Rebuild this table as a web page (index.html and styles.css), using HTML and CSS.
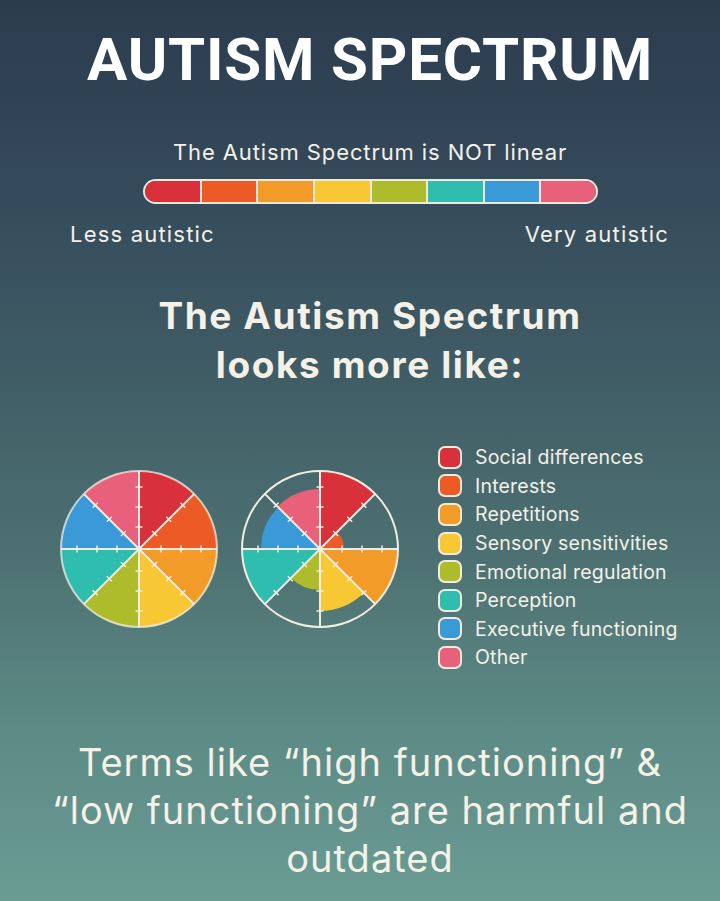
FILE: index.html
```html
<!DOCTYPE html>
<html lang="en">
<head>
<meta charset="utf-8">
<title>Autism Spectrum</title>
<link rel="stylesheet" href="styles.css">
</head>
<body>
<main class="page">
  <h1 class="title">AUTISM SPECTRUM</h1>
  <p class="subtitle">The Autism Spectrum is NOT linear</p>
  <div class="bar">
    <span class="seg c-red"></span>
    <span class="seg c-orange"></span>
    <span class="seg c-amber"></span>
    <span class="seg c-yellow"></span>
    <span class="seg c-green"></span>
    <span class="seg c-teal"></span>
    <span class="seg c-blue"></span>
    <span class="seg c-pink"></span>
  </div>
  <div class="bar-labels">
    <span>Less autistic</span>
    <span>Very autistic</span>
  </div>
  <h2 class="heading">The Autism Spectrum<br>looks more like:</h2>

  <section class="charts">
    <svg class="pie" viewBox="-80 -80 160 160" width="160" height="160">
      <defs>
        <g id="ticks">
          <path d="M-3.5 -22H3.5M-3.5 -42H3.5M-3.5 -62H3.5"/>
        </g>
      </defs>
      <path class="f-red" d="M0 0L0 -78A78 78 0 0 1 55.15 -55.15Z"/>
      <path class="f-orange" d="M0 0L55.15 -55.15A78 78 0 0 1 78 0Z"/>
      <path class="f-amber" d="M0 0L78 0A78 78 0 0 1 55.15 55.15Z"/>
      <path class="f-yellow" d="M0 0L55.15 55.15A78 78 0 0 1 0 78Z"/>
      <path class="f-green" d="M0 0L0 78A78 78 0 0 1 -55.15 55.15Z"/>
      <path class="f-teal" d="M0 0L-55.15 55.15A78 78 0 0 1 -78 0Z"/>
      <path class="f-blue" d="M0 0L-78 0A78 78 0 0 1 -55.15 -55.15Z"/>
      <path class="f-pink" d="M0 0L-55.15 -55.15A78 78 0 0 1 0 -78Z"/>
      <g class="lines">
        <circle cx="0" cy="0" r="78" class="outline-soft"/>
        <path d="M0 -78V78M-78 0H78M-55.15 -55.15L55.15 55.15M55.15 -55.15L-55.15 55.15"/>
        <use href="#ticks"/>
        <use href="#ticks" transform="rotate(45)"/>
        <use href="#ticks" transform="rotate(90)"/>
        <use href="#ticks" transform="rotate(135)"/>
        <use href="#ticks" transform="rotate(180)"/>
        <use href="#ticks" transform="rotate(225)"/>
        <use href="#ticks" transform="rotate(270)"/>
        <use href="#ticks" transform="rotate(315)"/>
      </g>
    </svg>

    <svg class="pie" viewBox="-80 -80 160 160" width="160" height="160">
      <path class="f-red" d="M0 0L0 -78A78 78 0 0 1 55.15 -55.15Z"/>
      <path class="f-orange" d="M0 0L16.97 -16.97A24 24 0 0 1 24 0Z"/>
      <path class="f-amber" d="M0 0L78 0A78 78 0 0 1 55.15 55.15Z"/>
      <path class="f-yellow" d="M0 0L43.84 43.84A62 62 0 0 1 0 62Z"/>
      <path class="f-green" d="M0 0L0 41A41 41 0 0 1 -28.99 28.99Z"/>
      <path class="f-teal" d="M0 0L-55.15 55.15A78 78 0 0 1 -78 0Z"/>
      <path class="f-blue" d="M0 0L-59 0A59 59 0 0 1 -41.72 -41.72Z"/>
      <path class="f-pink" d="M0 0L-42.43 -42.43A60 60 0 0 1 0 -60Z"/>
      <g class="lines">
        <circle cx="0" cy="0" r="78"/>
        <path d="M0 -78V78M-78 0H78M-55.15 -55.15L55.15 55.15M55.15 -55.15L-55.15 55.15"/>
        <use href="#ticks"/>
        <use href="#ticks" transform="rotate(45)"/>
        <use href="#ticks" transform="rotate(90)"/>
        <use href="#ticks" transform="rotate(135)"/>
        <use href="#ticks" transform="rotate(180)"/>
        <use href="#ticks" transform="rotate(225)"/>
        <use href="#ticks" transform="rotate(270)"/>
        <use href="#ticks" transform="rotate(315)"/>
      </g>
    </svg>

    <ul class="legend">
      <li><span class="swatch c-red"></span>Social differences</li>
      <li><span class="swatch c-orange"></span>Interests</li>
      <li><span class="swatch c-amber"></span>Repetitions</li>
      <li><span class="swatch c-yellow"></span>Sensory sensitivities</li>
      <li><span class="swatch c-green"></span>Emotional regulation</li>
      <li><span class="swatch c-teal"></span>Perception</li>
      <li><span class="swatch c-blue"></span>Executive functioning</li>
      <li><span class="swatch c-pink"></span>Other</li>
    </ul>
  </section>

  <p class="closing">Terms like “high functioning” &amp;<br>“low functioning” are harmful and<br>outdated</p>
</main>
</body>
</html>
```

FILE: styles.css
```css
* { box-sizing: border-box; }

html, body {
  margin: 0;
  padding: 0;
}

body {
  background: #6a9c94;
}

.page {
  width: 720px;
  height: 901px;
  overflow: hidden;
  padding-top: 30px;
  padding-left: 20px;
  color: #f4f1e8;
  text-align: center;
  font-family: Inter, "Noto Sans", sans-serif;
  background: linear-gradient(180deg, #2b3c4d 0%, #34495a 20%, #405d66 42%, #4d7172 62%, #5c8984 80%, #6a9c94 100%);
}

.title {
  margin: 0;
  font-family: Roboto, "Liberation Sans", sans-serif;
  font-weight: 700;
  font-size: 60px;
  line-height: 60px;
  letter-spacing: 0.8px;
  color: #ffffff;
}

.subtitle {
  margin: 50px 0 0;
  font-size: 22px;
  line-height: 24px;
  font-weight: 400;
  letter-spacing: 0.9px;
}

.bar {
  display: flex;
  width: 455px;
  height: 25px;
  margin: 15px 0 0 123px;
  border: 2px solid #efe9dc;
  border-radius: 13px;
  overflow: hidden;
}

.seg {
  flex: 1;
}

.seg + .seg {
  border-left: 2px solid #efe9dc;
}

.bar-labels {
  display: flex;
  justify-content: space-between;
  margin-top: 18px;
  padding: 0 51px 0 50px;
  font-size: 22px;
  line-height: 24px;
  letter-spacing: 1.2px;
}

.heading {
  margin: 45px 0 0;
  font-size: 37px;
  line-height: 49px;
  font-weight: 700;
  letter-spacing: 1.6px;
}

.charts {
  display: flex;
  align-items: flex-start;
  margin-top: 54px;
  padding-left: 39px;
}

.pie {
  display: block;
  margin-top: 26px;
  flex: none;
}

.pie + .pie {
  margin-left: 21px;
}

.lines {
  fill: none;
  stroke: #f1ede3;
  stroke-width: 2;
}

.lines use {
  stroke-width: 1.5;
}

.outline-soft {
  stroke: #f1ede3;
  stroke-opacity: 0.75;
}

.legend {
  list-style: none;
  margin: 0 0 0 38px;
  padding: 0;
  text-align: left;
}

.legend li {
  display: flex;
  align-items: center;
  height: 28.6px;
  font-size: 19.5px;
  line-height: 24px;
  letter-spacing: 0.2px;
  white-space: nowrap;
}

.swatch {
  width: 24px;
  height: 23px;
  margin-right: 13px;
  border: 2.5px solid #f2ecdc;
  border-radius: 7px;
  flex: none;
}

.closing {
  margin: 66px 0 0;
  font-size: 38px;
  line-height: 48px;
  font-weight: 400;
  letter-spacing: 1px;
}

.c-red { background: #d8313b; }
.c-orange { background: #ec5a25; }
.c-amber { background: #f39b28; }
.c-yellow { background: #f8c834; }
.c-green { background: #aebc2b; }
.c-teal { background: #2fbdaf; }
.c-blue { background: #3a9ad8; }
.c-pink { background: #e9607b; }

.f-red { fill: #d8313b; }
.f-orange { fill: #ec5a25; }
.f-amber { fill: #f39b28; }
.f-yellow { fill: #f8c834; }
.f-green { fill: #aebc2b; }
.f-teal { fill: #2fbdaf; }
.f-blue { fill: #3a9ad8; }
.f-pink { fill: #e9607b; }
```
